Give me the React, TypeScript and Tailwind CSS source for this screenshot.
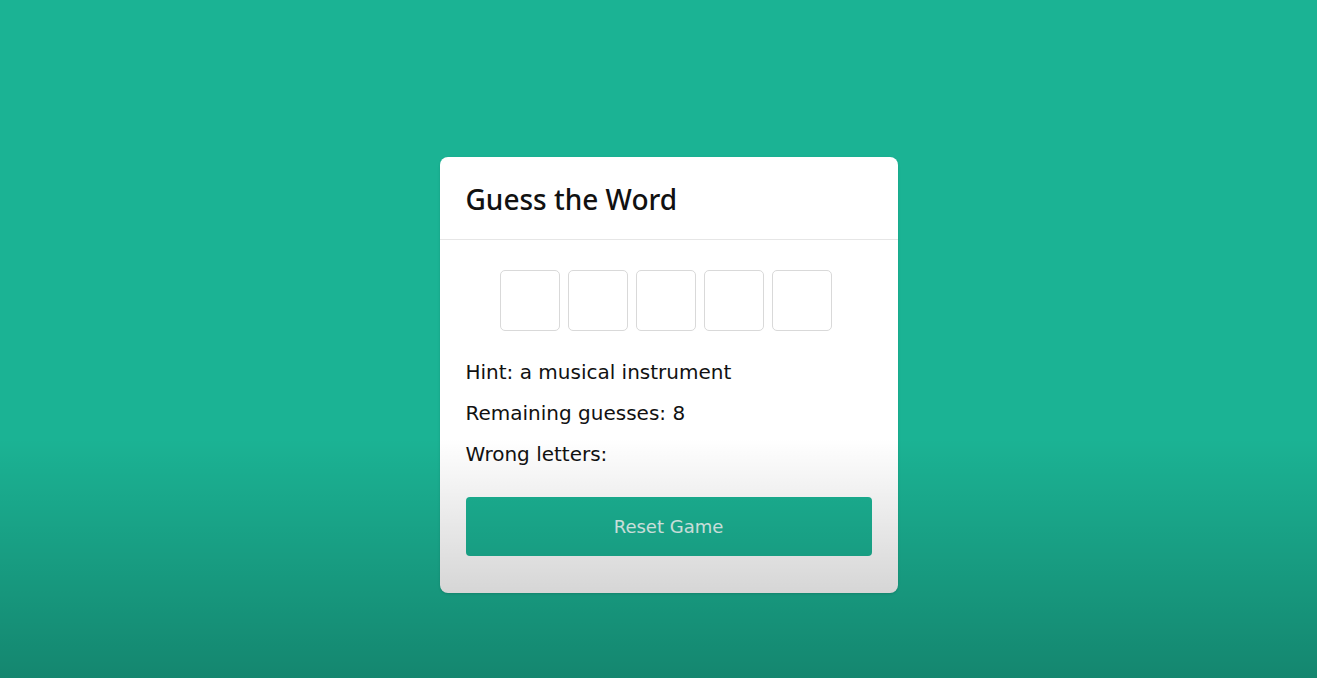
import { useState } from 'react'

const WORD_LENGTH = 5

export default function App() {
  const [guesses] = useState<string[]>(Array(WORD_LENGTH).fill(''))

  return (
    <div
      className="relative flex h-[678px] w-full justify-center overflow-hidden bg-[#1bb394] pl-[20px] pt-[157px]"
      style={{ fontFamily: '"DejaVu Sans", "Noto Sans", sans-serif' }}
    >
      <div className="h-[436px] w-[458px] rounded-lg bg-white shadow-sm">
        <div className="flex h-[83px] items-center border-b border-[#e6e6e6] px-[26px] pt-[2px]">
          <h1
            className="text-[28px] font-medium text-[#111]"
            style={{ fontFamily: '"Noto Sans", sans-serif' }}
          >
            Guess the Word
          </h1>
        </div>

        <div className="px-[26px]">
          <div className="mt-[30px] flex justify-center gap-[8px] pr-[6px]">
            {guesses.map((letter, i) => (
              <div
                key={i}
                className="flex h-[61px] w-[60px] items-center justify-center rounded-[5px] border border-[#d9d9d9] text-2xl"
              >
                {letter}
              </div>
            ))}
          </div>

          <div className="mt-[27px] flex flex-col gap-[13px] text-[20px] leading-[28px] text-[#111]">
            <p>Hint: a musical instrument</p>
            <p>Remaining guesses: 8</p>
            <p>Wrong letters:</p>
          </div>

          <button
            type="button"
            className="mt-[29px] h-[59px] w-full rounded-[4px] bg-[#1bb394] text-[18px] text-white/85"
          >
            Reset Game
          </button>
        </div>
      </div>

      <div className="pointer-events-none absolute inset-x-0 bottom-0 h-[240px] bg-gradient-to-b from-transparent to-black/25" />
    </div>
  )
}
